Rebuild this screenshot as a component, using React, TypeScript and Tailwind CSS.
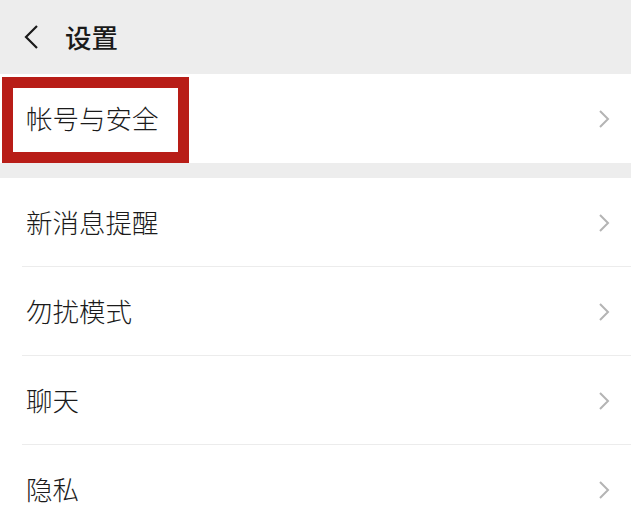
import React from "react";

const font = { fontFamily: '"Noto Sans CJK SC", "Noto Sans", sans-serif' };

function Chevron() {
  return (
    <svg width="14" height="20" viewBox="0 0 14 20" className="shrink-0">
      <polyline points="3,2 11,10 3,18" fill="none" stroke="#b4b4b4" strokeWidth="2" strokeLinejoin="miter" />
    </svg>
  );
}

function Row({ label, divider }: { label: string; divider?: boolean }) {
  return (
    <div className="relative flex h-[89px] items-center justify-between bg-white pl-[26px] pr-[20px]">
      <span className="text-[26.5px] font-light leading-none text-[#1b1b1b]">{label}</span>
      <Chevron />
      {divider && <div className="absolute bottom-0 left-[22px] right-0 h-px bg-[#ececec]" />}
    </div>
  );
}

export default function App() {
  return (
    <div className="h-[527px] w-[631px] overflow-hidden bg-[#ededed]" style={font}>
      <div className="flex h-[74px] items-center bg-[#ededed] pl-[22px]">
        <svg width="18" height="26" viewBox="0 0 18 26">
          <polyline points="15,2 4,13 15,24" fill="none" stroke="#1a1a1a" strokeWidth="2.2" />
        </svg>
        <span className="ml-[25px] text-[26.5px] font-medium leading-none text-[#1a1a1a]">设置</span>
      </div>
      <div className="relative">
        <Row label="帐号与安全" />
        <div className="absolute left-[2px] top-[3px] h-[86px] w-[187px] border-[11px] border-[#b81d17]" />
      </div>
      <div className="h-[15px]" />
      <Row label="新消息提醒" divider />
      <Row label="勿扰模式" divider />
      <Row label="聊天" divider />
      <Row label="隐私" />
    </div>
  );
}
